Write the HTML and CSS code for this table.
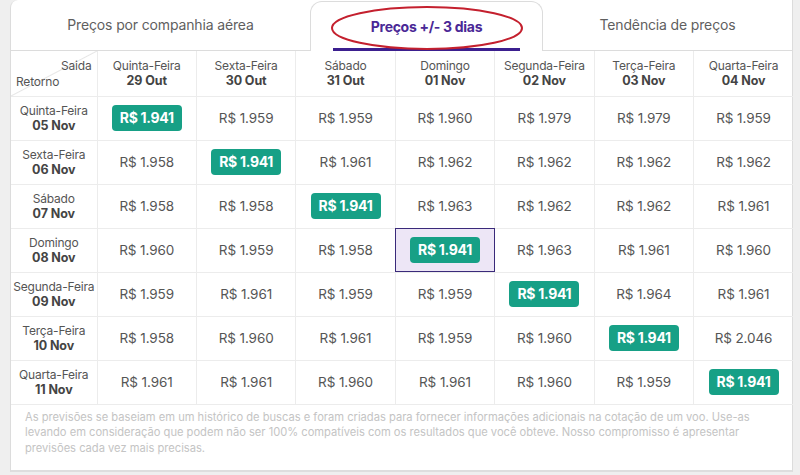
FILE: index.html
```html
<!DOCTYPE html>
<html lang="pt-BR">
<head>
<meta charset="utf-8">
<link rel="stylesheet" href="styles.css">
</head>
<body>
<div class="page">
  <div class="card">
    <div class="tabs">
      <div class="tab tab-first">Preços por companhia aérea</div>
      <div class="tab tab-active">
        <span class="tab-label">Preços +/- 3 dias</span>
        <span class="tab-bar"></span>
        <svg class="mark" width="200" height="48" viewBox="0 0 200 48"><ellipse cx="100" cy="24" rx="95" ry="21" fill="none" stroke="#c4202e" stroke-width="2"/></svg>
      </div>
      <div class="tab tab-last">Tendência de preços</div>
    </div>
    <table class="grid">
      <colgroup><col class="c0"><col><col><col><col><col><col><col></colgroup>
      <thead>
        <tr>
          <th class="corner"><span class="saida">Saida</span><span class="retorno">Retorno</span></th>
          <th><span class="d">Quinta-Feira</span><b>29 Out</b></th>
          <th><span class="d">Sexta-Feira</span><b>30 Out</b></th>
          <th><span class="d">Sábado</span><b>31 Out</b></th>
          <th><span class="d">Domingo</span><b>01 Nov</b></th>
          <th><span class="d">Segunda-Feira</span><b>02 Nov</b></th>
          <th><span class="d">Terça-Feira</span><b>03 Nov</b></th>
          <th><span class="d">Quarta-Feira</span><b>04 Nov</b></th>
        </tr>
      </thead>
      <tbody>
        <tr>
          <th><span class="d">Quinta-Feira</span><b>05 Nov</b></th>
          <td><span class="best">R$ 1.941</span></td><td>R$ 1.959</td><td>R$ 1.959</td><td>R$ 1.960</td><td>R$ 1.979</td><td>R$ 1.979</td><td>R$ 1.959</td>
        </tr>
        <tr>
          <th><span class="d">Sexta-Feira</span><b>06 Nov</b></th>
          <td>R$ 1.958</td><td><span class="best">R$ 1.941</span></td><td>R$ 1.961</td><td>R$ 1.962</td><td>R$ 1.962</td><td>R$ 1.962</td><td>R$ 1.962</td>
        </tr>
        <tr>
          <th><span class="d">Sábado</span><b>07 Nov</b></th>
          <td>R$ 1.958</td><td>R$ 1.958</td><td><span class="best">R$ 1.941</span></td><td>R$ 1.963</td><td>R$ 1.962</td><td>R$ 1.962</td><td>R$ 1.961</td>
        </tr>
        <tr>
          <th><span class="d">Domingo</span><b>08 Nov</b></th>
          <td>R$ 1.960</td><td>R$ 1.959</td><td>R$ 1.958</td><td class="selected"><span class="best">R$ 1.941</span></td><td>R$ 1.963</td><td>R$ 1.961</td><td>R$ 1.960</td>
        </tr>
        <tr>
          <th><span class="d">Segunda-Feira</span><b>09 Nov</b></th>
          <td>R$ 1.959</td><td>R$ 1.961</td><td>R$ 1.959</td><td>R$ 1.959</td><td><span class="best">R$ 1.941</span></td><td>R$ 1.964</td><td>R$ 1.961</td>
        </tr>
        <tr>
          <th><span class="d">Terça-Feira</span><b>10 Nov</b></th>
          <td>R$ 1.958</td><td>R$ 1.960</td><td>R$ 1.961</td><td>R$ 1.959</td><td>R$ 1.960</td><td><span class="best">R$ 1.941</span></td><td>R$ 2.046</td>
        </tr>
        <tr>
          <th><span class="d">Quarta-Feira</span><b>11 Nov</b></th>
          <td>R$ 1.961</td><td>R$ 1.961</td><td>R$ 1.960</td><td>R$ 1.961</td><td>R$ 1.960</td><td>R$ 1.959</td><td><span class="best">R$ 1.941</span></td>
        </tr>
      </tbody>
    </table>
    <p class="note">As previsões se baseiam em um histórico de buscas e foram criadas para fornecer informações adicionais na cotação de um voo. Use-as levando em consideração que podem não ser 100% compatíveis com os resultados que você obteve. Nosso compromisso é apresentar previsões cada vez mais precisas.</p>
  </div>
  <div class="strip"></div>
</div>
</body>
</html>
```

FILE: styles.css
```css
* { box-sizing: border-box; }
html, body { margin: 0; padding: 0; }
body {
  background: #efefef;
  font-family: Inter, "Noto Sans", sans-serif;
  color: #555;
  width: 800px;
  height: 475px;
  overflow: hidden;
}
.page { display: flex; flex-direction: column; }
.card {
  margin-left: 10px;
  width: 783px;
  background: #fff;
  border-left: 1px solid #dcdcdc;
  border-right: 1px solid #dcdcdc;
  border-bottom: 2px solid #dedede;
  border-top-left-radius: 8px;
}
.tabs { display: flex; height: 51px; }
.tab {
  display: flex;
  align-items: center;
  justify-content: center;
  font-size: 14px;
  letter-spacing: -0.15px;
  color: #5f5f5f;
  border-bottom: 1px solid #dcdcdc;
  padding-bottom: 2px;
}
.tab-first { width: 299px; }
.tab-last { flex: 1; }
.tab-active {
  position: relative;
  width: 233px;
  flex-direction: column;
  justify-content: flex-end;
  align-items: stretch;
  border: 1px solid #dcdcdc;
  border-bottom: none;
  border-radius: 12px 12px 0 0;
  padding: 0;
  margin-top: 1px;
}
.tab-label {
  flex: 1;
  display: flex;
  align-items: center;
  justify-content: center;
  font-weight: 700;
  font-size: 14px;
  letter-spacing: -0.3px;
  color: #4a2896;
  padding-top: 2px;
}
.tab-bar {
  height: 3px;
  margin: 0 22px 0 22px;
  background: #3b1f8f;
}
.mark { position: absolute; left: 16px; top: 2px; }
.grid {
  width: 782px;
  border-collapse: collapse;
  table-layout: fixed;
}
.grid col.c0 { width: 86px; }
.grid th, .grid td {
  border: 1px solid #ececec;
  text-align: center;
  vertical-align: middle;
  padding: 0;
  height: 44px;
}
.grid tr:first-child th { border-top: none; }
.grid tr th:first-child { border-left: none; }
.grid tr > :last-child { border-right: none; }
.grid thead th { height: 45px; }
.grid th {
  font-weight: 400;
  font-size: 12px;
  letter-spacing: -0.2px;
  line-height: 15px;
  color: #555;
  white-space: nowrap;
}
.grid th .d { display: block; }
.grid th b { display: block; font-weight: 700; color: #444; font-size: 12.5px; letter-spacing: -0.1px; }
.grid td { font-size: 13.5px; color: #555; letter-spacing: -0.1px; }
.best {
  display: inline-block;
  background: #17a086;
  color: #fff;
  font-weight: 700;
  font-size: 14px;
  line-height: 26px;
  width: 70px;
  border-radius: 4px;
  letter-spacing: -0.3px;
}
.selected {
  background: #ede6f6;
  outline: 1px solid #3a2a7a;
  outline-offset: -1px;
}
.corner {
  background: linear-gradient(to bottom right, transparent calc(50% - 1px), #e6e6e6 50%, transparent calc(50% + 1px));
}
.grid .corner .saida { display: block; text-align: right; padding-right: 5px; margin-bottom: 1px; }
.grid .corner .retorno { display: block; text-align: left; padding-left: 5px; }
.note {
  margin: 0;
  padding: 5px 14px 14px 14px;
  font-size: 11.15px;
  line-height: 15.5px;
  color: #c4c4c4;
}
.strip {
  margin-top: 5px;
  height: 10px;
  background: linear-gradient(to right, #2a2a2a 0, #3a3a3a 25%, #8a7a5a 26%, #6a6050 40%, #2a2a2a 41%, #2a2a2a 100%);
}
```
